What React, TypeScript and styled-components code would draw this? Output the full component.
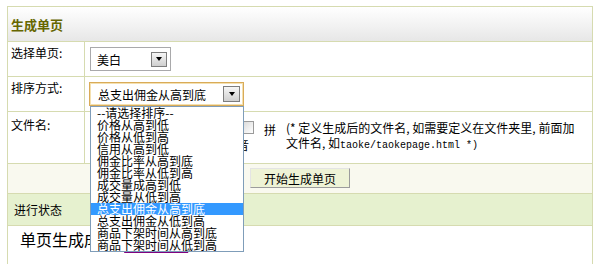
import React from 'react'
import styled, { createGlobalStyle } from 'styled-components'

const GlobalStyle = createGlobalStyle`
  *, *::before, *::after {
    box-sizing: border-box;
  }

  body {
    margin: 0;
    background: #fff;
    color: #000;
    font-family: "Noto Sans CJK SC", "Liberation Sans", sans-serif;
    font-size: 12px;
  }
`

const line = '#d6dbb0'

const Panel = styled.div`
  width: 586px;
  margin: 6px 0 0 7px;
  border: 1px solid ${line};
  border-bottom: none;
`

const Header = styled.div`
  display: flex;
  align-items: center;
  height: 35px;
  padding-left: 3px;
  border-bottom: 1px solid ${line};
  background: linear-gradient(#ffffff, #e7e7e7);
  color: #666600;
  font-size: 13px;
  font-weight: bold;
`

const FieldRow = styled.div<{ $h: number }>`
  display: flex;
  height: ${(p) => p.$h}px;
  border-bottom: 1px solid ${line};
`

const Label = styled.div<{ $top?: number }>`
  width: 77px;
  flex-shrink: 0;
  padding: ${(p) => p.$top ?? 4}px 0 0 3px;
  border-right: 1px solid ${line};
  line-height: 14px;
`

const Field = styled.div`
  display: flex;
  align-items: flex-start;
  flex: 1;
  padding: 5px 0 0 5px;
`

const SelectWrap = styled.div`
  position: relative;
`

const SelectBox = styled.div<{ $w: number; $focus?: boolean }>`
  display: flex;
  align-items: center;
  justify-content: space-between;
  width: ${(p) => p.$w}px;
  height: 24px;
  margin-left: ${(p) => (p.$focus ? -1 : 0)}px;
  padding: 0 3px 0 ${(p) => (p.$focus ? 8 : 6)}px;
  border: 1px solid ${(p) => (p.$focus ? '#d9ab58' : '#a9a9ab')};
  box-shadow: ${(p) => (p.$focus ? 'inset 0 0 0 1px #f4e0b0' : 'none')};
  background: #fff;
  font-size: 12px;
  white-space: nowrap;
`

const DropButton = styled.span<{ $size: number }>`
  display: flex;
  align-items: center;
  justify-content: center;
  width: ${(p) => p.$size}px;
  height: ${(p) => p.$size - 1}px;
  border: 1px solid #7d7d7d;
  background: linear-gradient(#f6f6f6, #cfcfcf);

  &::after {
    content: '';
    border-left: 3px solid transparent;
    border-right: 3px solid transparent;
    border-top: 4px solid #000;
  }
`

const OptionList = styled.ul`
  position: absolute;
  top: 24px;
  left: 0;
  z-index: 10;
  width: 154px;
  margin: 0;
  padding: 0;
  list-style: none;
  border: 1px solid #7f9db9;
  background: #fff;
`

const Option = styled.li<{ $active?: boolean }>`
  height: 12px;
  padding-left: 6px;
  line-height: 12px;
  font-size: 12px;
  white-space: nowrap;
  background: ${(p) => (p.$active ? '#3399ff' : 'transparent')};
  color: ${(p) => (p.$active ? '#fff' : '#000')};
`

const NameInput = styled.input`
  width: 142px;
  height: 21px;
  margin: 0;
  border: 1px solid #a9a9ab;
`

const Pinyin = styled.label`
  width: 45px;
  flex-shrink: 0;
  margin-left: 5px;
  padding-top: 10px;
  margin-top: -5px;
  line-height: 15px;
`

const Check = styled.input`
  appearance: none;
  width: 13px;
  height: 13px;
  margin: -1px 10px 0 4px;
  vertical-align: top;
  border: 1px solid #9a9a9a;
  background: linear-gradient(135deg, #d8d8d8, #ffffff);
`

const Note = styled.div`
  flex: 1;
  margin: -5px 0 0 4px;
  padding-top: 8px;
  line-height: 15px;
`

const Code = styled.span`
  font-family: "Liberation Mono", monospace;
  font-size: 10px;
`

const ActionRow = styled.div`
  display: flex;
  align-items: center;
  justify-content: center;
  height: 30px;
  border-bottom: 1px solid ${line};
  background: #f9f9ef;
`

const Button = styled.button`
  width: 100px;
  height: 20px;
  margin-top: -1px;
  padding: 0;
  border: 1px solid;
  border-color: #e4e4e4 #9c9c9c #9c9c9c #e4e4e4;
  background: #eef3d6;
  color: #000;
  font-family: inherit;
  font-size: 12px;
`

const StatusRow = styled.div`
  display: flex;
  align-items: center;
  height: 32px;
  padding-left: 6px;
  border-bottom: 1px solid ${line};
  background: #e6f1cf;
`

const Result = styled.div`
  height: 50px;
  padding: 3px 12px;
  font-size: 16px;
  line-height: 20px;
`

const ViewLink = styled.a`
  margin-left: 3px;
  color: #800080;
  text-decoration: underline;
  text-decoration-thickness: 2px;
  text-underline-offset: 5px;
`

const sortOptions = [
  '--请选择排序--',
  '价格从高到低',
  '价格从低到高',
  '信用从高到低',
  '佣金比率从高到底',
  '佣金比率从低到高',
  '成交量成高到低',
  '成交量从低到高',
  '总支出佣金从高到底',
  '总支出佣金从低到高',
  '商品下架时间从高到底',
  '商品下架时间从低到高',
]

const selected = '总支出佣金从高到底'

export default function App() {
  return (
    <>
      <GlobalStyle />
      <Panel>
        <Header>生成单页</Header>
        <FieldRow $h={35}>
          <Label>选择单页:</Label>
          <Field>
            <SelectBox $w={81}>
              美白
              <DropButton $size={16} />
            </SelectBox>
          </Field>
        </FieldRow>
        <FieldRow $h={35}>
          <Label>排序方式:</Label>
          <Field>
            <SelectWrap>
              <SelectBox $w={155} $focus>
                {selected}
                <DropButton $size={17} />
              </SelectBox>
              <OptionList>
                {sortOptions.map((o) => (
                  <Option key={o} $active={o === selected}>
                    {o}
                  </Option>
                ))}
              </OptionList>
            </SelectWrap>
          </Field>
        </FieldRow>
        <FieldRow $h={52}>
          <Label $top={6}>文件名:</Label>
          <Field>
            <NameInput type="text" />
            <Pinyin>
              <Check type="checkbox" />拼音
            </Pinyin>
            <Note>
              (* 定义生成后的文件名, 如需要定义在文件夹里, 前面加
              <br />
              文件名, 如<Code>taoke/taokepage.html *)</Code>
            </Note>
          </Field>
        </FieldRow>
        <ActionRow>
          <Button type="button">开始生成单页</Button>
        </ActionRow>
        <StatusRow>进行状态</StatusRow>
        <Result>
          单页生成成功!<ViewLink href="#">点击查看</ViewLink>
        </Result>
      </Panel>
    </>
  )
}
